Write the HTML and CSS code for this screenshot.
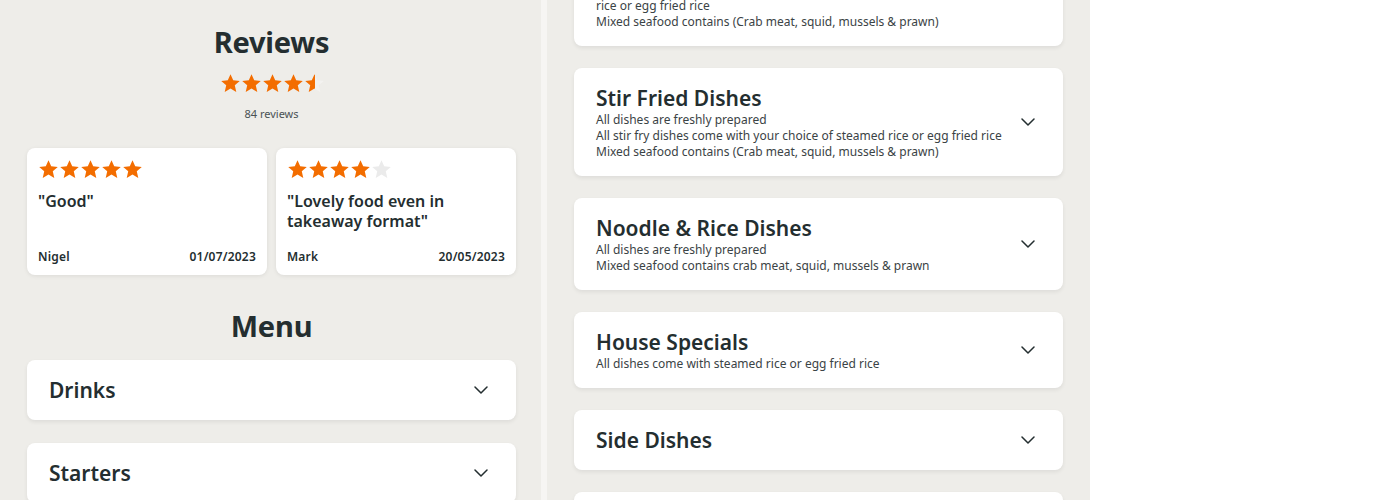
FILE: index.html
```html
<!DOCTYPE html>
<html lang="en">
<head>
<meta charset="utf-8">
<title>Reviews and Menu</title>
<link rel="stylesheet" href="styles.css">
</head>
<body>
<svg width="0" height="0" class="defs" aria-hidden="true">
  <defs>
    <symbol id="star" viewBox="0 0 24 24">
      <path d="M12 1.4l3.1 6.9 7.5.7-5.7 5.1 1.7 7.5L12 17.8 5.4 21.6l1.7-7.5-5.7-5.1 7.5-.7z"/>
    </symbol>
    <symbol id="chev" viewBox="0 0 14 8">
      <path d="M1 1l6 6 6-6" fill="none" stroke="currentColor" stroke-width="1.5" stroke-linecap="round" stroke-linejoin="round"/>
    </symbol>
    <linearGradient id="half" x1="0" x2="1" y1="0" y2="0">
      <stop offset="50%" stop-color="#f36d00"/>
      <stop offset="50%" stop-color="#f3f2f0"/>
    </linearGradient>
  </defs>
</svg>
<div class="page">
  <section class="col col-left">
    <h2 class="section-title">Reviews</h2>
    <div class="stars stars-summary">
      <svg class="star on"><use href="#star"/></svg>
      <svg class="star on"><use href="#star"/></svg>
      <svg class="star on"><use href="#star"/></svg>
      <svg class="star on"><use href="#star"/></svg>
      <svg class="star halfstar"><use href="#star"/></svg>
    </div>
    <p class="review-count">84 reviews</p>

    <div class="reviews">
      <article class="review">
        <div class="stars">
          <svg class="star on"><use href="#star"/></svg>
          <svg class="star on"><use href="#star"/></svg>
          <svg class="star on"><use href="#star"/></svg>
          <svg class="star on"><use href="#star"/></svg>
          <svg class="star on"><use href="#star"/></svg>
        </div>
        <p class="review-text">"Good"</p>
        <div class="review-meta"><span>Nigel</span><span>01/07/2023</span></div>
      </article>
      <article class="review">
        <div class="stars">
          <svg class="star on"><use href="#star"/></svg>
          <svg class="star on"><use href="#star"/></svg>
          <svg class="star on"><use href="#star"/></svg>
          <svg class="star on"><use href="#star"/></svg>
          <svg class="star off"><use href="#star"/></svg>
        </div>
        <p class="review-text">"Lovely food even in takeaway format"</p>
        <div class="review-meta"><span>Mark</span><span>20/05/2023</span></div>
      </article>
    </div>

    <h2 class="section-title menu-title">Menu</h2>
    <div class="cards">
      <div class="card">
        <div class="card-body"><h3 class="card-title">Drinks</h3></div>
        <svg class="chev"><use href="#chev"/></svg>
      </div>
      <div class="card">
        <div class="card-body"><h3 class="card-title">Starters</h3></div>
        <svg class="chev"><use href="#chev"/></svg>
      </div>
    </div>
  </section>

  <div class="divider"></div>

  <section class="col col-right">
    <div class="cards cards-scrolled">
      <div class="card">
        <div class="card-body">
          <p class="desc">rice or egg fried rice</p>
          <p class="desc">Mixed seafood contains (Crab meat, squid, mussels &amp; prawn)</p>
        </div>
      </div>
      <div class="card">
        <div class="card-body">
          <h3 class="card-title">Stir Fried Dishes</h3>
          <p class="desc">All dishes are freshly prepared</p>
          <p class="desc">All stir fry dishes come with your choice of steamed rice or egg fried rice</p>
          <p class="desc">Mixed seafood contains (Crab meat, squid, mussels &amp; prawn)</p>
        </div>
        <svg class="chev"><use href="#chev"/></svg>
      </div>
      <div class="card">
        <div class="card-body">
          <h3 class="card-title">Noodle &amp; Rice Dishes</h3>
          <p class="desc">All dishes are freshly prepared</p>
          <p class="desc">Mixed seafood contains crab meat, squid, mussels &amp; prawn</p>
        </div>
        <svg class="chev"><use href="#chev"/></svg>
      </div>
      <div class="card">
        <div class="card-body">
          <h3 class="card-title">House Specials</h3>
          <p class="desc">All dishes come with steamed rice or egg fried rice</p>
        </div>
        <svg class="chev"><use href="#chev"/></svg>
      </div>
      <div class="card">
        <div class="card-body"><h3 class="card-title">Side Dishes</h3></div>
        <svg class="chev"><use href="#chev"/></svg>
      </div>
      <div class="card">
        <div class="card-body"><h3 class="card-title">Set Meals</h3></div>
        <svg class="chev"><use href="#chev"/></svg>
      </div>
    </div>
  </section>

  <aside class="side"></aside>
</div>
</body>
</html>
```

FILE: styles.css
```css
* { box-sizing: border-box; }

html, body {
  margin: 0;
  padding: 0;
  height: 500px;
  overflow: hidden;
  background: #ffffff;
  font-family: "Noto Sans", "Open Sans", sans-serif;
  color: #242e30;
}

.defs { position: absolute; width: 0; height: 0; }

.page {
  display: flex;
  height: 500px;
  overflow: hidden;
}

.col {
  background: #eeede9;
  height: 500px;
  overflow: hidden;
}

.col-left {
  width: 541px;
  padding: 22px 25px 0 27px;
  display: flex;
  flex-direction: column;
}

.divider {
  width: 6px;
  background: #f6f5f3;
}

.col-right {
  width: 543px;
  padding: 0 27px 0 27px;
}

.side {
  flex: 1;
  background: #ffffff;
}

.section-title {
  margin: 0;
  font-size: 29px;
  line-height: 40px;
  font-weight: 700;
  text-align: center;
  letter-spacing: -0.2px;
}

.stars {
  display: flex;
  gap: 0;
}

.star {
  width: 21px;
  height: 21px;
}

.star.on { fill: #f36d00; }
.star.off { fill: #ebebeb; }
.star.halfstar { fill: url(#half); }

.stars-summary {
  justify-content: center;
  margin-top: 11px;
  padding-left: 1px;
}

.review-count {
  margin: 12px 0 0;
  font-size: 11px;
  line-height: 16px;
  text-align: center;
  color: #4a5254;
}

.reviews {
  margin-top: 26px;
  display: grid;
  grid-template-columns: 240px 240px;
  gap: 9px;
}

.review {
  background: #ffffff;
  border-radius: 8px;
  box-shadow: 0 1px 4px rgba(0, 0, 0, 0.08);
  padding: 11px 11px 10px;
  display: flex;
  flex-direction: column;
}

.review-text {
  margin: 11px 0 18px;
  font-size: 16px;
  line-height: 20px;
  font-weight: 600;
}

.review-meta {
  margin-top: auto;
  display: flex;
  justify-content: space-between;
  font-size: 12px;
  line-height: 16px;
  font-weight: 600;
  letter-spacing: 0.2px;
}

.menu-title {
  margin-top: 31px;
}

.cards {
  display: flex;
  flex-direction: column;
  gap: 22px;
}

.col-left .cards {
  margin-top: 14px;
  gap: 23px;
}

.cards-scrolled {
  margin-top: -18px;
}

.card {
  background: #ffffff;
  border-radius: 8px;
  box-shadow: 0 2px 4px rgba(0, 0, 0, 0.07);
  padding: 16px 28px 16px 22px;
  display: flex;
  align-items: center;
  gap: 16px;
}

.card-body {
  flex: 1;
  min-width: 0;
}

.card-title {
  margin: 0;
  font-size: 21px;
  line-height: 28px;
  font-weight: 600;
}

.desc {
  margin: 0;
  font-size: 12px;
  line-height: 16px;
  color: #3b4345;
  white-space: nowrap;
}

.chev {
  width: 14px;
  height: 8px;
  color: #242e30;
  flex: none;
}
```
